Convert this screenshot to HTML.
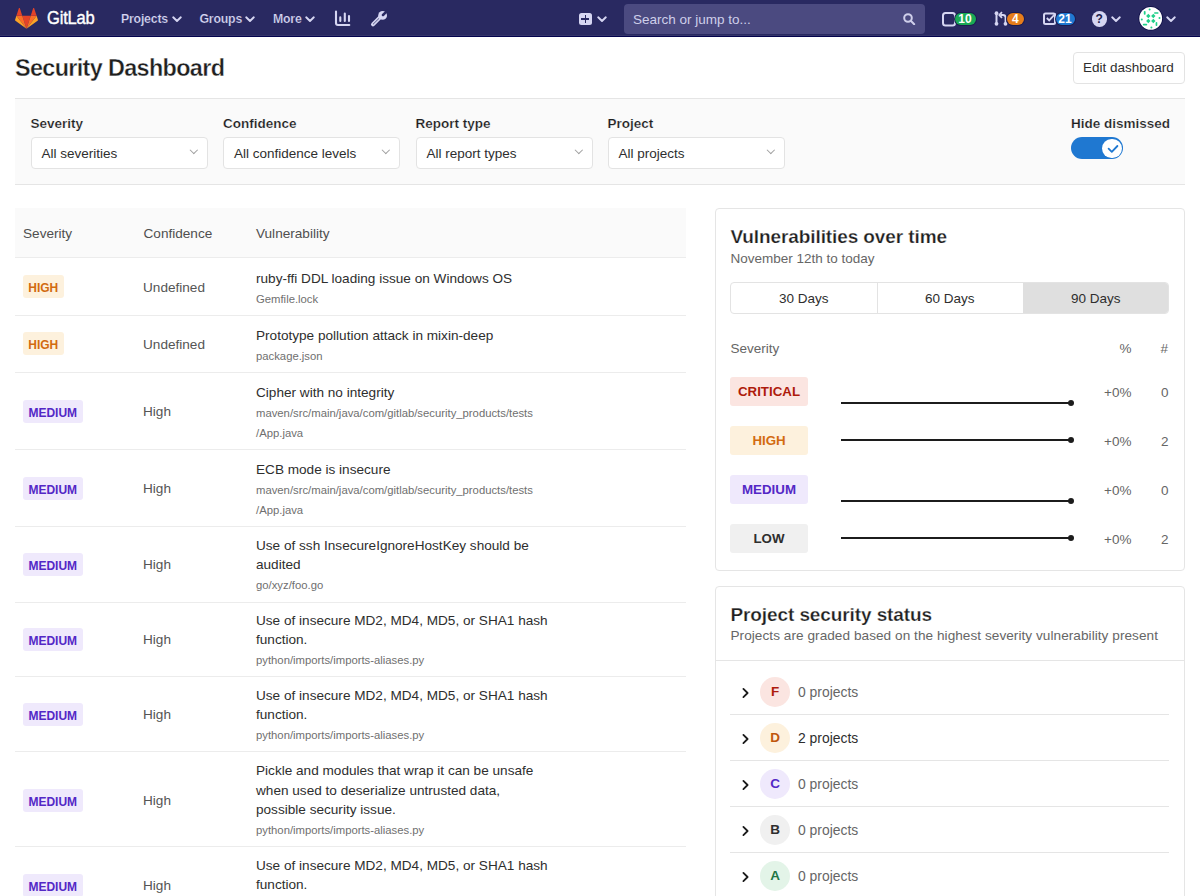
<!DOCTYPE html>
<html><head><meta charset="utf-8">
<style>
*{box-sizing:border-box;margin:0;padding:0}
html,body{width:1200px;height:896px;overflow:hidden;background:#fff;font-family:"Liberation Sans",sans-serif;color:#2e2e2e}
.t{position:absolute;white-space:nowrap;line-height:1}
.b{position:absolute}
#hdr{position:absolute;left:0;top:0;width:1200px;height:37px;background:#292961;border-bottom:1px solid #04044e;box-shadow:inset 0 -1px 0 #35356a}
.nav{position:absolute;top:13.3px;font-size:12.3px;font-weight:bold;color:#d6d6f2;white-space:nowrap;line-height:1;letter-spacing:-0.2px;-webkit-text-stroke:0.2px #292961}
.chev{position:absolute;width:6.5px;height:6.5px;border-right:1.8px solid #d6d6f2;border-bottom:1.8px solid #d6d6f2;transform:rotate(45deg)}
.badge{position:absolute;border-radius:3px;font-weight:bold;font-size:12px;line-height:23px;text-align:center;height:23px;padding-top:1.6px}
.hi{background:#fdf1dd;color:#d26b10}
.me{background:#efe9fc;color:#5328c6}
.cr{background:#fbe5e1;color:#ae1b0b}
.lo{background:#f0f0f0;color:#2e2e2e}
.conf{position:absolute;left:143px;font-size:13.6px;color:#555;line-height:1;white-space:nowrap}
.vt{position:absolute;left:256px;font-size:13.6px;color:#2e2e2e;line-height:1;white-space:nowrap}
.vp{position:absolute;left:256px;font-size:11.3px;color:#6f6f6f;line-height:1;white-space:nowrap}
.rb{position:absolute;left:15px;width:671px;height:1px;background:#ececec}
.dd{position:absolute;top:137px;width:177px;height:32px;background:#fff;border:1px solid #e3e3e3;border-radius:4px}
.dd span{position:absolute;left:10px;top:9px;font-size:13.5px;line-height:1;color:#2e2e2e;white-space:nowrap}
.dd i{position:absolute;right:10px;top:8.8px;width:5.6px;height:5.6px;border-right:1.7px solid #a0a0a0;border-bottom:1.7px solid #a0a0a0;transform:rotate(45deg)}
.flab{position:absolute;top:117px;font-size:13.5px;font-weight:bold;color:#1f1f1f;line-height:1;white-space:nowrap;-webkit-text-stroke:0.2px #fafafa}
.card{position:absolute;left:714.5px;width:470.5px;border:1px solid #e5e5e5;border-radius:4px;background:#fff}
.pct{position:absolute;left:1104px;font-size:13.5px;color:#666;line-height:1}
.num{position:absolute;left:1161px;font-size:13.5px;color:#666;line-height:1}
.spark{position:absolute;left:841px;width:229px;height:2px;background:#1c1c1c}
.dot{position:absolute;left:1067.5px;width:6px;height:6px;border-radius:50%;background:#1c1c1c}
.grade{position:absolute;left:760px;width:30px;height:30px;border-radius:50%;font-weight:bold;font-size:13.5px;line-height:30px;text-align:center}
.gch{position:absolute;left:739px;width:7px;height:7px;border-right:2px solid #1a1a1a;border-top:2px solid #1a1a1a;transform:rotate(45deg)}
.gtx{position:absolute;left:798px;font-size:13.9px;color:#666;line-height:1;white-space:nowrap}
.gdiv{position:absolute;left:730px;width:439px;height:1px;background:#e5e5e5}
</style></head><body>
<div id="hdr"></div>
<!-- logo -->
<svg class="b" style="left:14.6px;top:8px" width="23" height="21" viewBox="0 0 36 33">
<path fill="#e24329" d="M18 32.6L24.6 12.2H11.4z"/>
<path fill="#fc6d26" d="M18 32.6L11.4 12.2H2.1z"/>
<path fill="#fca326" d="M2.1 12.2L.1 18.4c-.2.6 0 1.2.5 1.5L18 32.6z"/>
<path fill="#e24329" d="M2.1 12.2h9.3L7.4.1c-.2-.6-1.1-.6-1.3 0z"/>
<path fill="#fc6d26" d="M18 32.6l6.6-20.4h9.3z"/>
<path fill="#fca326" d="M33.9 12.2l2 6.2c.2.6 0 1.2-.5 1.5L18 32.6z"/>
<path fill="#e24329" d="M33.9 12.2h-9.3L28.6.1c.2-.6 1.1-.6 1.3 0z"/>
</svg>
<div class="t" style="left:46.5px;top:9.2px;font-size:18.8px;color:#fff;letter-spacing:-0.2px;-webkit-text-stroke:0.4px #fff;transform:scaleX(0.88);transform-origin:0 0">GitLab</div>
<div class="nav" style="left:121px">Projects</div><svg class="b" style="left:171.5px;top:16px" width="10" height="7" viewBox="0 0 10 7"><path d="M1.2 1.3L5 5L8.8 1.3" fill="none" stroke="#d6d6f2" stroke-width="1.9" stroke-linecap="round" stroke-linejoin="round"/></svg>
<div class="nav" style="left:199.5px">Groups</div><svg class="b" style="left:244.5px;top:16px" width="10" height="7" viewBox="0 0 10 7"><path d="M1.2 1.3L5 5L8.8 1.3" fill="none" stroke="#d6d6f2" stroke-width="1.9" stroke-linecap="round" stroke-linejoin="round"/></svg>
<div class="nav" style="left:273px">More</div><svg class="b" style="left:305px;top:16px" width="10" height="7" viewBox="0 0 10 7"><path d="M1.2 1.3L5 5L8.8 1.3" fill="none" stroke="#d6d6f2" stroke-width="1.9" stroke-linecap="round" stroke-linejoin="round"/></svg>
<!-- chart icon -->
<svg class="b" style="left:334px;top:10px" width="18" height="17" viewBox="0 0 18 17">
<path d="M2 1.6V13a2 2 0 0 0 2 2h11.3" fill="none" stroke="#d6d6f2" stroke-width="2.1" stroke-linecap="round"/>
<path d="M6.3 7.4V11M10.8 3.6V11M15 6.1V11" stroke="#d6d6f2" stroke-width="2.1" stroke-linecap="round"/>
</svg>
<!-- wrench -->
<svg class="b" style="left:368px;top:8px" width="20" height="20" viewBox="0 0 20 20">
<path d="M5 16.3L12.2 9.2" stroke="#d6d6f2" stroke-width="4" stroke-linecap="round"/>
<circle cx="14.6" cy="7.4" r="4.4" fill="#d6d6f2"/>
<path d="M15 7L19.2 2.8" stroke="#292961" stroke-width="2.5" stroke-linecap="round"/>
<path d="M5.3 16L10.8 10.6" stroke="#292961" stroke-width="0.9" stroke-linecap="round" opacity="0.8"/>
</svg>
<!-- plus -->
<div class="b" style="left:579px;top:12.5px;width:12.5px;height:12.5px;background:#d6d6f2;border-radius:2.5px"></div>
<div class="b" style="left:584.5px;top:14.8px;width:1.6px;height:8px;background:#292961"></div>
<div class="b" style="left:581.3px;top:18px;width:8px;height:1.6px;background:#292961"></div>
<svg class="b" style="left:596.5px;top:16px" width="10" height="7" viewBox="0 0 10 7"><path d="M1.2 1.3L5 5L8.8 1.3" fill="none" stroke="#d6d6f2" stroke-width="1.9" stroke-linecap="round" stroke-linejoin="round"/></svg>
<!-- search -->
<div class="b" style="left:624px;top:4px;width:300.5px;height:30px;background:#4b4a80;border-radius:4px"></div>
<div class="t" style="left:633px;top:12.5px;font-size:13.5px;color:#cfcfea">Search or jump to...</div>
<svg class="b" style="left:902.5px;top:13px" width="13" height="12" viewBox="0 0 13 12">
<circle cx="5" cy="5" r="3.8" fill="none" stroke="#cfcfea" stroke-width="2"/>
<path d="M7.8 7.8l3.4 3.4" stroke="#cfcfea" stroke-width="2" stroke-linecap="round"/>
</svg>
<!-- issues -->
<svg class="b" style="left:942px;top:11.5px" width="14" height="15" viewBox="0 0 14 15">
<rect x="1" y="1" width="12" height="12.5" rx="2.5" fill="none" stroke="#d6d6f2" stroke-width="2"/>
</svg>
<div class="b" style="left:954.5px;top:12.5px;width:21px;height:12.5px;background:#1aaa55;border-radius:6.5px;box-shadow:0 0 0 1px #1c1c50;color:#fff;font-weight:bold;font-size:12px;line-height:13px;text-align:center">10</div>
<!-- MR -->
<svg class="b" style="left:994px;top:11px" width="16" height="15" viewBox="0 0 16 15">
<path d="M2.5 2v11" stroke="#d6d6f2" stroke-width="2"/>
<circle cx="2.5" cy="2.2" r="1.9" fill="#d6d6f2"/><circle cx="2.5" cy="12.8" r="1.9" fill="#d6d6f2"/>
<path d="M11.5 13V6.5a2.5 2.5 0 0 0-2.5-2.5H6.5" fill="none" stroke="#d6d6f2" stroke-width="1.8"/>
<path d="M8 1.2L5.3 4 8 6.8" fill="none" stroke="#d6d6f2" stroke-width="1.8"/>
<circle cx="11.5" cy="12.8" r="1.9" fill="#d6d6f2"/>
</svg>
<div class="b" style="left:1007px;top:12.5px;width:16.5px;height:12.5px;background:#e67d1b;border-radius:6.5px;box-shadow:0 0 0 1px #1c1c50;color:#fff;font-weight:bold;font-size:12px;line-height:13px;text-align:center">4</div>
<!-- todos -->
<svg class="b" style="left:1043px;top:12px" width="14" height="13" viewBox="0 0 14 13">
<rect x="1" y="1.5" width="11" height="10.5" rx="1.5" fill="none" stroke="#d6d6f2" stroke-width="2"/>
<path d="M3.8 6l2.4 2.4L12.5 1.5" fill="none" stroke="#d6d6f2" stroke-width="1.8"/>
</svg>
<div class="b" style="left:1055.5px;top:12.5px;width:19px;height:12.5px;background:#1f78d1;border-radius:6.5px;box-shadow:0 0 0 1px #1c1c50;color:#fff;font-weight:bold;font-size:12px;line-height:13px;text-align:center">21</div>
<!-- help -->
<div class="b" style="left:1091.5px;top:11px;width:15.5px;height:15.5px;border-radius:50%;background:#d6d6f2;color:#1c1c4a;font-weight:bold;font-size:12px;line-height:16px;text-align:center">?</div>
<svg class="b" style="left:1111px;top:16px" width="10" height="7" viewBox="0 0 10 7"><path d="M1.2 1.3L5 5L8.8 1.3" fill="none" stroke="#d6d6f2" stroke-width="1.9" stroke-linecap="round" stroke-linejoin="round"/></svg>
<!-- avatar -->
<svg class="b" style="left:1136px;top:4px" width="30" height="29" viewBox="0 0 30 29">
<circle cx="14.7" cy="14.4" r="12.2" fill="#0b0b45"/>
<circle cx="14.7" cy="14.4" r="11.4" fill="#fff"/>
<g fill="#21d08a">
<path d="M12.3 9.8l2.2 2.2-2.2 2.2-2.2-2.2zM17.3 9.8l2.2 2.2-2.2 2.2-2.2-2.2zM12.3 14.8l2.2 2.2-2.2 2.2-2.2-2.2zM17.3 14.8l2.2 2.2-2.2 2.2-2.2-2.2z"/>
<circle cx="13.6" cy="5.5" r="1"/>
<rect x="7.8" y="7" width="1.8" height="3.8" rx=".8"/>
<rect x="18" y="8.2" width="4.6" height="1.6" rx=".8"/>
<circle cx="23.5" cy="14" r="1"/>
<circle cx="5.8" cy="15.6" r="1"/>
<rect x="6.8" y="19.8" width="4.4" height="1.7" rx=".8"/>
<rect x="19.6" y="18.1" width="1.7" height="4" rx=".8"/>
<circle cx="15.4" cy="23.6" r="1"/>
</g>
</svg>
<svg class="b" style="left:1166px;top:16px" width="10" height="7" viewBox="0 0 10 7"><path d="M1.2 1.3L5 5L8.8 1.3" fill="none" stroke="#d6d6f2" stroke-width="1.9" stroke-linecap="round" stroke-linejoin="round"/></svg>

<!-- title -->
<div class="t" style="left:15px;top:57px;font-size:23.4px;font-weight:bold;color:#1f1f1f;letter-spacing:-0.65px;-webkit-text-stroke:0.35px #fff">Security Dashboard</div>
<div class="b" style="left:1073px;top:52px;width:112px;height:32px;border:1px solid #e3e3e3;border-radius:4px;background:#fff"></div>
<div class="t" style="left:1083px;top:61px;font-size:13.5px;color:#2e2e2e">Edit dashboard</div>

<!-- filters -->
<div class="b" style="left:15px;top:98px;width:1170px;height:87px;background:#fafafa;border-top:1px solid #e5e5e5;border-bottom:1px solid #e5e5e5"></div>
<div class="flab" style="left:30.5px">Severity</div>
<div class="flab" style="left:223px">Confidence</div>
<div class="flab" style="left:415.5px">Report type</div>
<div class="flab" style="left:607.5px">Project</div>
<div class="flab" style="left:1071px">Hide dismissed</div>
<div class="dd" style="left:30.5px"><span>All severities</span><i></i></div>
<div class="dd" style="left:223px"><span>All confidence levels</span><i></i></div>
<div class="dd" style="left:415.5px"><span>All report types</span><i></i></div>
<div class="dd" style="left:607.5px"><span>All projects</span><i></i></div>
<div class="b" style="left:1071px;top:137.3px;width:52px;height:22.2px;border-radius:11px;background:#1f78d1"></div>
<div class="b" style="left:1102px;top:138.7px;width:19.6px;height:19.6px;border-radius:50%;background:#fff"></div>
<svg class="b" style="left:1106.6px;top:142.6px" width="12" height="11" viewBox="0 0 12 11"><path d="M1.6 5.6l3.2 3.2 5.6-5.8" fill="none" stroke="#1f78d1" stroke-width="1.8" stroke-linecap="round" stroke-linejoin="round"/></svg>

<!-- table -->
<div class="b" style="left:15px;top:207.5px;width:671px;height:50.5px;background:#fafafa;border-bottom:1px solid #ececec"></div>
<div class="t" style="left:23px;top:226.5px;font-size:13.6px;color:#4f4f4f">Severity</div>
<div class="t" style="left:143.5px;top:226.5px;font-size:13.6px;color:#4f4f4f">Confidence</div>
<div class="t" style="left:256px;top:226.5px;font-size:13.6px;color:#4f4f4f">Vulnerability</div>

<div class="rb" style="top:315px"></div>
<div class="rb" style="top:372px"></div>
<div class="rb" style="top:448.5px"></div>
<div class="rb" style="top:525.5px"></div>
<div class="rb" style="top:601.5px"></div>
<div class="rb" style="top:676px"></div>
<div class="rb" style="top:751px"></div>
<div class="rb" style="top:846px"></div>

<!-- row1 -->
<div class="badge hi" style="left:23px;top:275px;width:40.5px">HIGH</div>
<div class="conf" style="top:280.5px">Undefined</div>
<div class="vt" style="top:272px">ruby-ffi DDL loading issue on Windows OS</div>
<div class="vp" style="top:294px">Gemfile.lock</div>
<!-- row2 -->
<div class="badge hi" style="left:23px;top:332px;width:40.5px">HIGH</div>
<div class="conf" style="top:337.5px">Undefined</div>
<div class="vt" style="top:329px">Prototype pollution attack in mixin-deep</div>
<div class="vp" style="top:351px">package.json</div>
<!-- row3 -->
<div class="badge me" style="left:23px;top:400px;width:59.5px">MEDIUM</div>
<div class="conf" style="top:404.5px">High</div>
<div class="vt" style="top:386px">Cipher with no integrity</div>
<div class="vp" style="top:408px">maven/src/main/java/com/gitlab/security_products/tests</div>
<div class="vp" style="top:427.5px">/App.java</div>
<!-- row4 -->
<div class="badge me" style="left:23px;top:477px;width:59.5px">MEDIUM</div>
<div class="conf" style="top:481.5px">High</div>
<div class="vt" style="top:463px">ECB mode is insecure</div>
<div class="vp" style="top:485px">maven/src/main/java/com/gitlab/security_products/tests</div>
<div class="vp" style="top:505px">/App.java</div>
<!-- row5 -->
<div class="badge me" style="left:23px;top:553px;width:59.5px">MEDIUM</div>
<div class="conf" style="top:557.5px">High</div>
<div class="vt" style="top:539px">Use of ssh InsecureIgnoreHostKey should be</div>
<div class="vt" style="top:558.25px">audited</div>
<div class="vp" style="top:580px">go/xyz/foo.go</div>
<!-- row6 -->
<div class="badge me" style="left:23px;top:628px;width:59.5px">MEDIUM</div>
<div class="conf" style="top:632.5px">High</div>
<div class="vt" style="top:614px">Use of insecure MD2, MD4, MD5, or SHA1 hash</div>
<div class="vt" style="top:633.25px">function.</div>
<div class="vp" style="top:655px">python/imports/imports-aliases.py</div>
<!-- row7 -->
<div class="badge me" style="left:23px;top:703px;width:59.5px">MEDIUM</div>
<div class="conf" style="top:707.5px">High</div>
<div class="vt" style="top:689px">Use of insecure MD2, MD4, MD5, or SHA1 hash</div>
<div class="vt" style="top:708.25px">function.</div>
<div class="vp" style="top:730px">python/imports/imports-aliases.py</div>
<!-- row8 -->
<div class="badge me" style="left:23px;top:789px;width:59.5px">MEDIUM</div>
<div class="conf" style="top:793.5px">High</div>
<div class="vt" style="top:764px">Pickle and modules that wrap it can be unsafe</div>
<div class="vt" style="top:783.75px">when used to deserialize untrusted data,</div>
<div class="vt" style="top:803.25px">possible security issue.</div>
<div class="vp" style="top:825px">python/imports/imports-aliases.py</div>
<!-- row9 -->
<div class="badge me" style="left:23px;top:874px;width:59.5px">MEDIUM</div>
<div class="conf" style="top:878.5px">High</div>
<div class="vt" style="top:859px">Use of insecure MD2, MD4, MD5, or SHA1 hash</div>
<div class="vt" style="top:878.25px">function.</div>

<!-- card 1 -->
<div class="card" style="top:208px;height:363px"></div>
<div class="t" style="left:730.5px;top:226.5px;font-size:19px;font-weight:bold;color:#1f1f1f;letter-spacing:-0.1px;-webkit-text-stroke:0.25px #fff">Vulnerabilities over time</div>
<div class="t" style="left:730.5px;top:251.5px;font-size:13.5px;color:#666">November 12th to today</div>
<div class="b" style="left:730px;top:282px;width:439px;height:32px;border:1px solid #e3e3e3;border-radius:4px;background:#fff;overflow:hidden">
 <div class="b" style="left:145.5px;top:0;width:1px;height:30px;background:#e3e3e3"></div>
 <div class="b" style="left:291.5px;top:0;width:146px;height:30px;background:#dfdfdf"></div>
</div>
<div class="t" style="left:779px;top:292px;font-size:13.5px;color:#2e2e2e">30 Days</div>
<div class="t" style="left:925px;top:292px;font-size:13.5px;color:#2e2e2e">60 Days</div>
<div class="t" style="left:1071px;top:292px;font-size:13.5px;color:#2e2e2e">90 Days</div>
<div class="t" style="left:730.5px;top:341.5px;font-size:13.5px;color:#666">Severity</div>
<div class="t" style="left:1119.5px;top:341.5px;font-size:13.5px;color:#666">%</div>
<div class="t" style="left:1160.5px;top:341.5px;font-size:13.5px;color:#666">#</div>

<div class="badge cr" style="left:730px;top:377px;width:78px;height:28.5px;line-height:28.5px;font-size:13.3px;padding-top:0.8px">CRITICAL</div>
<div class="badge hi" style="left:730px;top:426px;width:78px;height:28.5px;line-height:28.5px;font-size:13.3px;padding-top:0.8px">HIGH</div>
<div class="badge me" style="left:730px;top:475px;width:78px;height:28.5px;line-height:28.5px;font-size:13.3px;padding-top:0.8px">MEDIUM</div>
<div class="badge lo" style="left:730px;top:524px;width:78px;height:28.5px;line-height:28.5px;font-size:13.3px;padding-top:0.8px">LOW</div>
<div class="spark" style="top:402.4px"></div><div class="dot" style="top:400.4px"></div>
<div class="spark" style="top:438.9px"></div><div class="dot" style="top:436.9px"></div>
<div class="spark" style="top:500.1px"></div><div class="dot" style="top:498.1px"></div>
<div class="spark" style="top:537px"></div><div class="dot" style="top:535px"></div>
<div class="pct" style="top:385.5px">+0%</div><div class="num" style="top:385.5px">0</div>
<div class="pct" style="top:434.5px">+0%</div><div class="num" style="top:434.5px">2</div>
<div class="pct" style="top:483.5px">+0%</div><div class="num" style="top:483.5px">0</div>
<div class="pct" style="top:532.5px">+0%</div><div class="num" style="top:532.5px">2</div>

<!-- card 2 -->
<div class="card" style="top:586px;height:320px"></div>
<div class="b" style="left:715px;top:660px;width:470px;height:1px;background:#e5e5e5"></div>
<div class="t" style="left:730.5px;top:604.5px;font-size:19px;font-weight:bold;color:#1f1f1f;letter-spacing:-0.1px;-webkit-text-stroke:0.25px #fff">Project security status</div>
<div class="t" style="left:730.5px;top:629px;font-size:13.6px;color:#666;letter-spacing:0.05px">Projects are graded based on the highest severity vulnerability present</div>

<svg class="b" style="left:740.5px;top:686.5px" width="10" height="12" viewBox="0 0 10 12"><path d="M2.4 1.9L6.6 6L2.4 10.1" fill="none" stroke="#1a1a1a" stroke-width="1.8" stroke-linecap="round" stroke-linejoin="round"/></svg><div class="grade cr" style="top:676.5px">F</div><div class="gtx" style="top:686.2px">0 projects</div>
<div class="gdiv" style="top:714px"></div>
<svg class="b" style="left:740.5px;top:732.5px" width="10" height="12" viewBox="0 0 10 12"><path d="M2.4 1.9L6.6 6L2.4 10.1" fill="none" stroke="#1a1a1a" stroke-width="1.8" stroke-linecap="round" stroke-linejoin="round"/></svg><div class="grade hi" style="top:722.5px;color:#c0560d">D</div><div class="gtx" style="top:732.2px;color:#2e2e2e">2 projects</div>
<div class="gdiv" style="top:760px"></div>
<svg class="b" style="left:740.5px;top:778.5px" width="10" height="12" viewBox="0 0 10 12"><path d="M2.4 1.9L6.6 6L2.4 10.1" fill="none" stroke="#1a1a1a" stroke-width="1.8" stroke-linecap="round" stroke-linejoin="round"/></svg><div class="grade me" style="top:768.5px">C</div><div class="gtx" style="top:778.2px">0 projects</div>
<div class="gdiv" style="top:806px"></div>
<svg class="b" style="left:740.5px;top:824.5px" width="10" height="12" viewBox="0 0 10 12"><path d="M2.4 1.9L6.6 6L2.4 10.1" fill="none" stroke="#1a1a1a" stroke-width="1.8" stroke-linecap="round" stroke-linejoin="round"/></svg><div class="grade lo" style="top:814.5px">B</div><div class="gtx" style="top:824.2px">0 projects</div>
<div class="gdiv" style="top:852px"></div>
<svg class="b" style="left:740.5px;top:870.5px" width="10" height="12" viewBox="0 0 10 12"><path d="M2.4 1.9L6.6 6L2.4 10.1" fill="none" stroke="#1a1a1a" stroke-width="1.8" stroke-linecap="round" stroke-linejoin="round"/></svg><div class="grade" style="top:860.5px;background:#e3f4e8;color:#217645">A</div><div class="gtx" style="top:870.2px">0 projects</div>
</body></html>
